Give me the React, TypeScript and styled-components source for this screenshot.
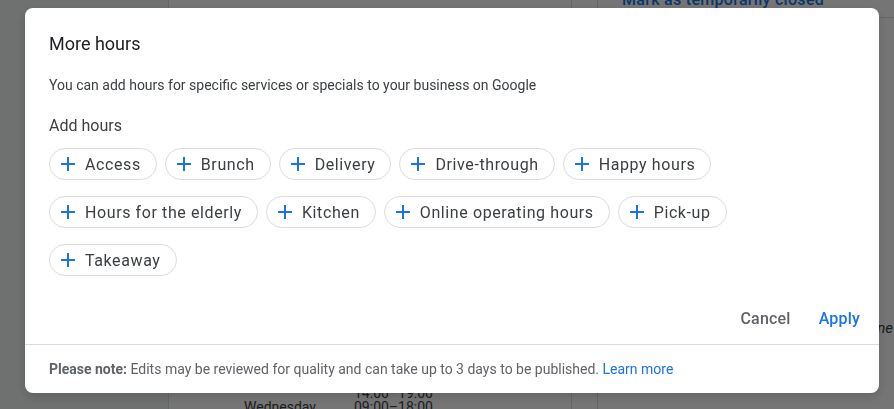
import React from "react";
import styled, { createGlobalStyle } from "styled-components";

const Global = createGlobalStyle`
  html, body { margin: 0; padding: 0; }
  body {
    width: 894px; height: 409px; overflow: hidden;
    font-family: Roboto, "Liberation Sans", Arial, sans-serif;
    background: #fff;
  }
  #root { height: 409px; }
`;

/* ---------- underlying page ---------- */
const Page = styled.div`
  display: flex;
  height: 409px;
  overflow: hidden;
`;
const Sidebar = styled.div`
  width: 168px;
  flex: none;
  background: #f1f3f4;
  border-right: 1px solid #dadce0;
`;
const MainCol = styled.div`
  width: 403px;
  flex: none;
  border-right: 1px solid #dadce0;
  display: flex;
  flex-direction: column;
  padding-top: 386px;
  box-sizing: border-box;
  font-size: 14px;
  color: #3c4043;
`;
const HoursRow = styled.div`
  display: flex;
  height: 14px;
  line-height: 14px;
`;
const DayCell = styled.span`
  width: 185px;
  padding-left: 75px;
  box-sizing: border-box;
`;
const Gutter = styled.div`
  width: 25px;
  flex: none;
  border-right: 1px solid #dadce0;
`;
const RightCol = styled.div`
  flex: 1;
  display: flex;
  flex-direction: column;
  min-width: 0;
`;
const TopLink = styled.div`
  margin-top: -10px;
  height: 27px;
  line-height: 20px;
  font-size: 16px;
  font-weight: 500;
  letter-spacing: 0.3px;
  color: #1a73e8;
  border-bottom: 1px solid #dadce0;
  margin-left: 281px;
  text-indent: -257px;
  white-space: nowrap;
`;
const SideNote = styled.div`
  margin-top: 301px;
  text-align: right;
  white-space: nowrap;
  font-style: italic;
  font-size: 15px;
  color: #3c4043;
  margin-right: 1px;
`;

/* ---------- modal ---------- */
const Scrim = styled.div`
  position: fixed;
  inset: 0;
  background: rgba(0, 0, 0, 0.54);
  display: flex;
  align-items: flex-start;
  justify-content: flex-start;
  padding: 8px 0 0 25px;
`;
const Dialog = styled.div`
  width: 854px;
  height: 385px;
  background: #fff;
  border-radius: 8px;
  display: flex;
  flex-direction: column;
  box-shadow: 0 4px 12px rgba(0, 0, 0, 0.15);
  overflow: hidden;
`;
const Body = styled.div`
  padding: 24px 24px 0 24px;
  display: flex;
  flex-direction: column;
`;
const Title = styled.h2`
  margin: 0;
  font-size: 18px;
  font-weight: 400;
  line-height: 24px;
  color: #202124;
`;
const Description = styled.p`
  margin: 19px 0 0;
  font-size: 14px;
  line-height: 20px;
  color: #3c4043;
`;
const Subhead = styled.h3`
  margin: 19px 0 0;
  font-size: 16px;
  font-weight: 400;
  line-height: 24px;
  color: #3c4043;
`;
const ChipGrid = styled.div`
  display: flex;
  flex-wrap: wrap;
  gap: 16px 8px;
  margin-top: 10px;
  width: 720px;
`;
const Chip = styled.button`
  display: inline-flex;
  align-items: center;
  gap: 8px;
  height: 32px;
  box-sizing: border-box;
  padding: 0 15px 0 9px;
  border: 1px solid #dadce0;
  border-radius: 16px;
  background: #fff;
  font-family: inherit;
  font-size: 16px;
  color: #3c4043;
  letter-spacing: 0.6px;
  cursor: pointer;
`;
const Actions = styled.div`
  display: flex;
  justify-content: flex-end;
  gap: 12px;
  padding: 24px 11px 8px 0;
`;
const TextButton = styled.button<{ $primary?: boolean }>`
  height: 36px;
  padding: 0 8px;
  border: none;
  background: transparent;
  font-family: inherit;
  font-size: 16px;
  font-weight: 500;
  letter-spacing: 0.2px;
  color: ${(p) => (p.$primary ? "#1a73e8" : "#5f6368")};
  cursor: pointer;
`;
const Footer = styled.div`
  border-top: 1px solid #dadce0;
  padding: 14px 24px;
  font-size: 14px;
  line-height: 20px;
  color: #5f6368;
`;
const Strong = styled.b`
  font-weight: 700;
`;
const Link = styled.a`
  color: #1a73e8;
  text-decoration: none;
`;

const PlusIcon = () => (
  <svg width="18" height="18" viewBox="0 0 18 18" aria-hidden>
    <path d="M9 2v14M2 9h14" stroke="#1a73e8" strokeWidth="2" fill="none" />
  </svg>
);

const chips = [
  "Access",
  "Brunch",
  "Delivery",
  "Drive-through",
  "Happy hours",
  "Hours for the elderly",
  "Kitchen",
  "Online operating hours",
  "Pick-up",
  "Takeaway",
];

export default function App() {
  return (
    <>
      <Global />
      <Page>
        <Sidebar />
        <MainCol>
          <HoursRow>
            <DayCell />
            <span>14:00–19:00</span>
          </HoursRow>
          <HoursRow>
            <DayCell>Wednesday</DayCell>
            <span>09:00–18:00</span>
          </HoursRow>
        </MainCol>
        <Gutter />
        <RightCol>
          <TopLink>Mark as temporarily closed</TopLink>
          <SideNote>Hours shown in your time zone</SideNote>
        </RightCol>
      </Page>
      <Scrim>
        <Dialog role="dialog">
          <Body>
            <Title>More hours</Title>
            <Description>
              You can add hours for specific services or specials to your business on Google
            </Description>
            <Subhead>Add hours</Subhead>
            <ChipGrid>
              {chips.map((c) => (
                <Chip key={c}>
                  <PlusIcon />
                  {c}
                </Chip>
              ))}
            </ChipGrid>
          </Body>
          <Actions>
            <TextButton>Cancel</TextButton>
            <TextButton $primary>Apply</TextButton>
          </Actions>
          <Footer>
            <Strong>Please note:</Strong> Edits may be reviewed for quality and can take up to 3 days
            to be published. <Link href="#">Learn more</Link>
          </Footer>
        </Dialog>
      </Scrim>
    </>
  );
}
